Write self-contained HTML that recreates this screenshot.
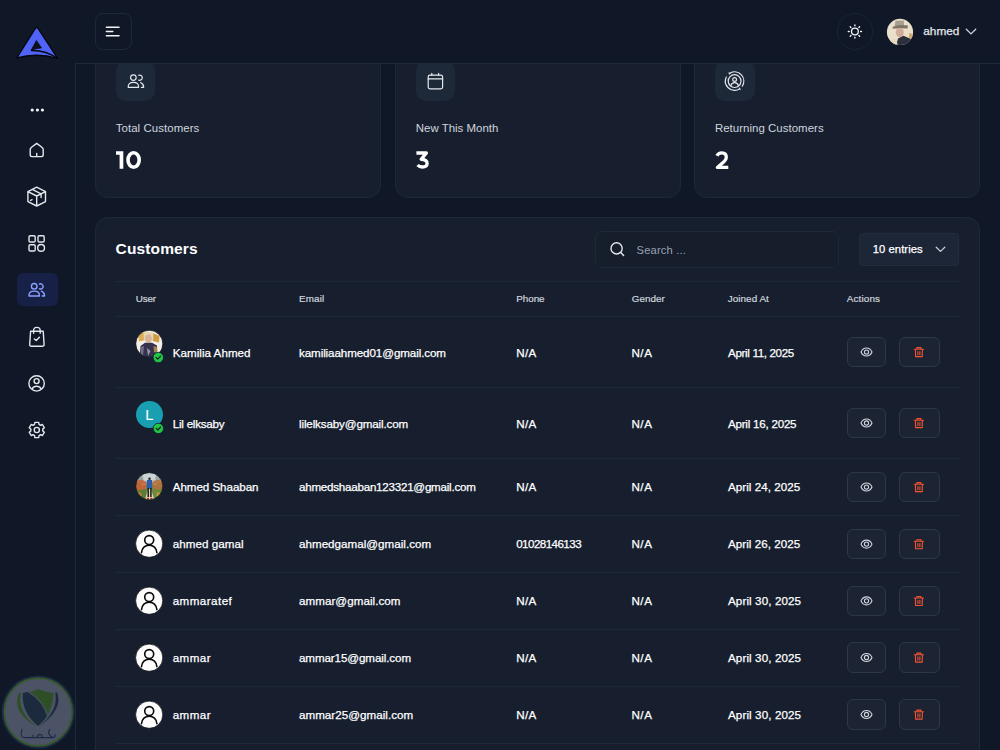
<!DOCTYPE html>
<html><head><meta charset="utf-8">
<style>
*{box-sizing:border-box;margin:0;padding:0}
html,body{width:1000px;height:750px;overflow:hidden;background:#101828;font-family:"Liberation Sans",sans-serif;color:#fff}
.a{position:absolute}
.t{position:absolute;white-space:nowrap;line-height:1}
svg{position:absolute;left:0;top:0;overflow:visible}
</style></head>
<body>
<div class="a" style="left:94.90px;top:40.00px;width:286.60px;height:157.50px;background:#171F2F;border:1px solid #1D2939;border-radius:13px;"></div>
<div class="a" style="left:115.70px;top:61.00px;width:39.70px;height:40.00px;background:#1D2939;border-radius:10px;"></div>
<div class="a" style="left:395.00px;top:40.00px;width:285.80px;height:157.50px;background:#171F2F;border:1px solid #1D2939;border-radius:13px;"></div>
<div class="a" style="left:415.80px;top:61.00px;width:39.70px;height:40.00px;background:#1D2939;border-radius:10px;"></div>
<div class="a" style="left:694.10px;top:40.00px;width:285.90px;height:157.50px;background:#171F2F;border:1px solid #1D2939;border-radius:13px;"></div>
<div class="a" style="left:714.90px;top:61.00px;width:39.70px;height:40.00px;background:#1D2939;border-radius:10px;"></div>
<div class="a" style="left:95.00px;top:217.00px;width:885.00px;height:583.00px;background:#171F2F;border:1px solid #1D2939;border-radius:13px;"></div>
<div class="a" style="left:0.00px;top:63.00px;width:75.00px;height:687.00px;background:#101828;border-radius:0px;"></div>
<div class="a" style="left:74.50px;top:63.00px;width:1.00px;height:687.00px;background:#1D2939;border-radius:0px;"></div>
<div class="a" style="left:0.00px;top:0.00px;width:1000.00px;height:63.00px;background:#101828;border-radius:0px;"></div>
<div class="a" style="left:74.50px;top:63.00px;width:925.50px;height:1.00px;background:#1D2939;border-radius:0px;"></div>
<div class="a" style="left:94.50px;top:13.00px;width:37.00px;height:37.00px;background:transparent;border:1px solid #1D2939;border-radius:8px;"></div>
<div class="a" style="left:836.70px;top:13.30px;width:36.30px;height:36.40px;background:transparent;border:1px solid #1A2333;border-radius:20px;"></div>
<div class="t" style="left:923.30px;top:25.91px;font-size:11.8px;color:#E4E7EC;-webkit-text-stroke:0.25px #E4E7EC;">ahmed</div>
<div class="t" style="left:115.70px;top:123.11px;font-size:11.45px;color:#D0D5DD;letter-spacing:0.071px;">Total Customers</div>
<div class="t" style="left:415.80px;top:123.11px;font-size:11.45px;color:#D0D5DD;letter-spacing:0.008px;">New This Month</div>
<div class="t" style="left:714.90px;top:123.11px;font-size:11.45px;color:#D0D5DD;letter-spacing:0.039px;">Returning Customers</div>
<div class="t" style="left:115.60px;top:241.28px;font-size:15.5px;color:#FFFFFF;font-weight:700;letter-spacing:0.125px;">Customers</div>
<div class="a" style="left:595.40px;top:231.20px;width:243.90px;height:36.50px;background:#161D2B;border:1px solid #1D2939;border-radius:7px;"></div>
<div class="t" style="left:636.60px;top:244.76px;font-size:11.15px;color:#98A2B3;letter-spacing:0.178px;">Search ...</div>
<div class="a" style="left:859.30px;top:232.70px;width:100.20px;height:33.10px;background:#1D2636;border:1px solid #222C3D;border-radius:4px;"></div>
<div class="t" style="left:872.80px;top:243.98px;font-size:11.25px;color:#FFFFFF;-webkit-text-stroke:0.25px #FFFFFF;letter-spacing:0.044px;">10 entries</div>
<div class="a" style="left:115.5px;top:281.00px;width:844.5px;height:1px;background:#1D2939"></div>
<div class="a" style="left:115.5px;top:316.20px;width:844.5px;height:1px;background:#1D2939"></div>
<div class="a" style="left:115.5px;top:386.90px;width:844.5px;height:1px;background:#1D2939"></div>
<div class="a" style="left:115.5px;top:458.10px;width:844.5px;height:1px;background:#1D2939"></div>
<div class="a" style="left:115.5px;top:515.00px;width:844.5px;height:1px;background:#1D2939"></div>
<div class="a" style="left:115.5px;top:572.20px;width:844.5px;height:1px;background:#1D2939"></div>
<div class="a" style="left:115.5px;top:628.50px;width:844.5px;height:1px;background:#1D2939"></div>
<div class="a" style="left:115.5px;top:685.50px;width:844.5px;height:1px;background:#1D2939"></div>
<div class="a" style="left:115.5px;top:742.50px;width:844.5px;height:1px;background:#1D2939"></div>
<div class="t" style="left:135.80px;top:294.22px;font-size:9.9px;color:#D0D5DD;-webkit-text-stroke:0.2px #D0D5DD;letter-spacing:-0.200px;">User</div>
<div class="t" style="left:299.00px;top:294.22px;font-size:9.9px;color:#D0D5DD;-webkit-text-stroke:0.2px #D0D5DD;letter-spacing:0.150px;">Email</div>
<div class="t" style="left:516.30px;top:294.22px;font-size:9.9px;color:#D0D5DD;-webkit-text-stroke:0.2px #D0D5DD;letter-spacing:-0.075px;">Phone</div>
<div class="t" style="left:631.80px;top:294.22px;font-size:9.9px;color:#D0D5DD;-webkit-text-stroke:0.2px #D0D5DD;">Gender</div>
<div class="t" style="left:727.80px;top:294.22px;font-size:9.9px;color:#D0D5DD;-webkit-text-stroke:0.2px #D0D5DD;letter-spacing:0.050px;">Joined At</div>
<div class="t" style="left:846.80px;top:294.22px;font-size:9.9px;color:#D0D5DD;-webkit-text-stroke:0.2px #D0D5DD;letter-spacing:0.133px;">Actions</div>
<div class="t" style="left:172.70px;top:347.18px;font-size:11.6px;color:#FFFFFF;-webkit-text-stroke:0.25px #FFFFFF;letter-spacing:0.042px;">Kamilia Ahmed</div>
<div class="t" style="left:299.00px;top:347.18px;font-size:11.6px;color:#FFFFFF;-webkit-text-stroke:0.25px #FFFFFF;letter-spacing:-0.087px;">kamiliaahmed01@gmail.com</div>
<div class="t" style="left:516.20px;top:347.18px;font-size:11.6px;color:#FFFFFF;-webkit-text-stroke:0.25px #FFFFFF;letter-spacing:0.400px;">N/A</div>
<div class="t" style="left:631.40px;top:347.18px;font-size:11.6px;color:#FFFFFF;-webkit-text-stroke:0.25px #FFFFFF;letter-spacing:0.600px;">N/A</div>
<div class="t" style="left:728.00px;top:347.18px;font-size:11.6px;color:#FFFFFF;-webkit-text-stroke:0.25px #FFFFFF;letter-spacing:-0.338px;">April 11, 2025</div>
<div class="a" style="left:846.60px;top:336.95px;width:39.40px;height:30.20px;background:#1C2434;border:1px solid #2D3748;border-radius:6px;"></div>
<div class="a" style="left:899.20px;top:336.95px;width:40.40px;height:30.20px;background:#1C2434;border:1px solid #2D3748;border-radius:6px;"></div>
<div class="t" style="left:172.70px;top:417.98px;font-size:11.6px;color:#FFFFFF;-webkit-text-stroke:0.25px #FFFFFF;letter-spacing:-0.220px;">Lil elksaby</div>
<div class="t" style="left:299.00px;top:417.98px;font-size:11.6px;color:#FFFFFF;-webkit-text-stroke:0.25px #FFFFFF;letter-spacing:-0.126px;">lilelksaby@gmail.com</div>
<div class="t" style="left:516.20px;top:417.98px;font-size:11.6px;color:#FFFFFF;-webkit-text-stroke:0.25px #FFFFFF;letter-spacing:0.400px;">N/A</div>
<div class="t" style="left:631.40px;top:417.98px;font-size:11.6px;color:#FFFFFF;-webkit-text-stroke:0.25px #FFFFFF;letter-spacing:0.600px;">N/A</div>
<div class="t" style="left:728.00px;top:417.98px;font-size:11.6px;color:#FFFFFF;-webkit-text-stroke:0.25px #FFFFFF;letter-spacing:-0.231px;">April 16, 2025</div>
<div class="a" style="left:846.60px;top:407.90px;width:39.40px;height:30.20px;background:#1C2434;border:1px solid #2D3748;border-radius:6px;"></div>
<div class="a" style="left:899.20px;top:407.90px;width:40.40px;height:30.20px;background:#1C2434;border:1px solid #2D3748;border-radius:6px;"></div>
<div class="t" style="left:172.70px;top:481.38px;font-size:11.6px;color:#FFFFFF;-webkit-text-stroke:0.25px #FFFFFF;letter-spacing:-0.042px;">Ahmed Shaaban</div>
<div class="t" style="left:299.00px;top:481.38px;font-size:11.6px;color:#FFFFFF;-webkit-text-stroke:0.25px #FFFFFF;letter-spacing:-0.237px;">ahmedshaaban123321@gmail.com</div>
<div class="t" style="left:516.20px;top:481.38px;font-size:11.6px;color:#FFFFFF;-webkit-text-stroke:0.25px #FFFFFF;letter-spacing:0.400px;">N/A</div>
<div class="t" style="left:631.40px;top:481.38px;font-size:11.6px;color:#FFFFFF;-webkit-text-stroke:0.25px #FFFFFF;letter-spacing:0.600px;">N/A</div>
<div class="t" style="left:728.00px;top:481.38px;font-size:11.6px;color:#FFFFFF;-webkit-text-stroke:0.25px #FFFFFF;letter-spacing:0.046px;">April 24, 2025</div>
<div class="a" style="left:846.60px;top:471.95px;width:39.40px;height:30.20px;background:#1C2434;border:1px solid #2D3748;border-radius:6px;"></div>
<div class="a" style="left:899.20px;top:471.95px;width:40.40px;height:30.20px;background:#1C2434;border:1px solid #2D3748;border-radius:6px;"></div>
<div class="t" style="left:172.70px;top:538.18px;font-size:11.6px;color:#FFFFFF;-webkit-text-stroke:0.25px #FFFFFF;letter-spacing:0.070px;">ahmed gamal</div>
<div class="t" style="left:299.00px;top:538.18px;font-size:11.6px;color:#FFFFFF;-webkit-text-stroke:0.25px #FFFFFF;letter-spacing:0.026px;">ahmedgamal@gmail.com</div>
<div class="t" style="left:516.20px;top:538.18px;font-size:11.6px;color:#FFFFFF;-webkit-text-stroke:0.25px #FFFFFF;letter-spacing:-0.550px;">01028146133</div>
<div class="t" style="left:631.40px;top:538.18px;font-size:11.6px;color:#FFFFFF;-webkit-text-stroke:0.25px #FFFFFF;letter-spacing:0.600px;">N/A</div>
<div class="t" style="left:728.00px;top:538.18px;font-size:11.6px;color:#FFFFFF;-webkit-text-stroke:0.25px #FFFFFF;letter-spacing:0.046px;">April 26, 2025</div>
<div class="a" style="left:846.60px;top:529.00px;width:39.40px;height:30.20px;background:#1C2434;border:1px solid #2D3748;border-radius:6px;"></div>
<div class="a" style="left:899.20px;top:529.00px;width:40.40px;height:30.20px;background:#1C2434;border:1px solid #2D3748;border-radius:6px;"></div>
<div class="t" style="left:172.70px;top:595.18px;font-size:11.6px;color:#FFFFFF;-webkit-text-stroke:0.25px #FFFFFF;letter-spacing:0.463px;">ammaratef</div>
<div class="t" style="left:299.00px;top:595.18px;font-size:11.6px;color:#FFFFFF;-webkit-text-stroke:0.25px #FFFFFF;letter-spacing:0.057px;">ammar@gmail.com</div>
<div class="t" style="left:516.20px;top:595.18px;font-size:11.6px;color:#FFFFFF;-webkit-text-stroke:0.25px #FFFFFF;letter-spacing:0.400px;">N/A</div>
<div class="t" style="left:631.40px;top:595.18px;font-size:11.6px;color:#FFFFFF;-webkit-text-stroke:0.25px #FFFFFF;letter-spacing:0.600px;">N/A</div>
<div class="t" style="left:728.00px;top:595.18px;font-size:11.6px;color:#FFFFFF;-webkit-text-stroke:0.25px #FFFFFF;letter-spacing:0.115px;">April 30, 2025</div>
<div class="a" style="left:846.60px;top:585.75px;width:39.40px;height:30.20px;background:#1C2434;border:1px solid #2D3748;border-radius:6px;"></div>
<div class="a" style="left:899.20px;top:585.75px;width:40.40px;height:30.20px;background:#1C2434;border:1px solid #2D3748;border-radius:6px;"></div>
<div class="t" style="left:172.70px;top:652.18px;font-size:11.6px;color:#FFFFFF;-webkit-text-stroke:0.25px #FFFFFF;letter-spacing:0.450px;">ammar</div>
<div class="t" style="left:299.00px;top:652.18px;font-size:11.6px;color:#FFFFFF;-webkit-text-stroke:0.25px #FFFFFF;letter-spacing:-0.094px;">ammar15@gmail.com</div>
<div class="t" style="left:516.20px;top:652.18px;font-size:11.6px;color:#FFFFFF;-webkit-text-stroke:0.25px #FFFFFF;letter-spacing:0.400px;">N/A</div>
<div class="t" style="left:631.40px;top:652.18px;font-size:11.6px;color:#FFFFFF;-webkit-text-stroke:0.25px #FFFFFF;letter-spacing:0.600px;">N/A</div>
<div class="t" style="left:728.00px;top:652.18px;font-size:11.6px;color:#FFFFFF;-webkit-text-stroke:0.25px #FFFFFF;letter-spacing:0.115px;">April 30, 2025</div>
<div class="a" style="left:846.60px;top:642.40px;width:39.40px;height:30.20px;background:#1C2434;border:1px solid #2D3748;border-radius:6px;"></div>
<div class="a" style="left:899.20px;top:642.40px;width:40.40px;height:30.20px;background:#1C2434;border:1px solid #2D3748;border-radius:6px;"></div>
<div class="t" style="left:172.70px;top:709.18px;font-size:11.6px;color:#FFFFFF;-webkit-text-stroke:0.25px #FFFFFF;letter-spacing:0.450px;">ammar</div>
<div class="t" style="left:299.00px;top:709.18px;font-size:11.6px;color:#FFFFFF;-webkit-text-stroke:0.25px #FFFFFF;letter-spacing:0.037px;">ammar25@gmail.com</div>
<div class="t" style="left:516.20px;top:709.18px;font-size:11.6px;color:#FFFFFF;-webkit-text-stroke:0.25px #FFFFFF;letter-spacing:0.400px;">N/A</div>
<div class="t" style="left:631.40px;top:709.18px;font-size:11.6px;color:#FFFFFF;-webkit-text-stroke:0.25px #FFFFFF;letter-spacing:0.600px;">N/A</div>
<div class="t" style="left:728.00px;top:709.18px;font-size:11.6px;color:#FFFFFF;-webkit-text-stroke:0.25px #FFFFFF;letter-spacing:0.115px;">April 30, 2025</div>
<div class="a" style="left:846.60px;top:699.40px;width:39.40px;height:30.20px;background:#1C2434;border:1px solid #2D3748;border-radius:6px;"></div>
<div class="a" style="left:899.20px;top:699.40px;width:40.40px;height:30.20px;background:#1C2434;border:1px solid #2D3748;border-radius:6px;"></div>
<div class="a" style="left:17.40px;top:273.40px;width:40.20px;height:33.00px;background:#172148;border-radius:6px;"></div>
<svg width="1000" height="750" viewBox="0 0 1000 750">
<defs>
<clipPath id="cav1"><circle cx="149.3" cy="343.8" r="13.5"/></clipPath>
<clipPath id="cav3"><circle cx="149.3" cy="486.2" r="13.5"/></clipPath>
<clipPath id="cavh"><circle cx="900" cy="31.9" r="13.1"/></clipPath>
</defs>
<path d="M35.2 28.6 Q36.7 26.6 38.2 28.6 L57.6 58.4 Q37 52.4 16.8 57.9 Z" fill="#4F63F7" stroke="#05070d" stroke-width="1.3" stroke-linejoin="round"/>
<path d="M36.4 40.4 L41.6 47.9 Q36 48.2 31 50.4 Z" fill="#0B0F1A" stroke="#05070d" stroke-width="0.6"/>
<path d="M31 50.4 Q46 50 57.6 58.4" fill="none" stroke="#05070d" stroke-width="1.5"/>
<circle cx="32.2" cy="110" r="1.6" fill="#F2F4F7"/>
<circle cx="37.4" cy="110" r="1.6" fill="#F2F4F7"/>
<circle cx="42.4" cy="110" r="1.6" fill="#F2F4F7"/>
<path d="M31.5 147.3 L36.7 143.4 L41.9 147.3 Q43.2 148.2 43.2 149.8 L43.2 154.8 Q43.2 156.6 41.4 156.6 L32 156.6 Q30.2 156.6 30.2 154.8 L30.2 149.8 Q30.2 148.2 31.5 147.3 Z M36.7 153.4 L36.7 156.6" fill="none" stroke="#E4E7EC" stroke-width="1.4" stroke-linecap="round" stroke-linejoin="round"/>
<path d="M36.7 187.2 L45.5 191.6 L45.5 201.6 L36.7 206 L27.9 201.6 L27.9 191.6 Z M27.9 191.6 L36.7 196 L45.5 191.6 M36.7 196 L36.7 206 M32.3 189.4 L41.1 193.8 L41.1 197.6 M30.5 200.5 L32 199.7" fill="none" stroke="#E4E7EC" stroke-width="1.4" stroke-linecap="round" stroke-linejoin="round"/>
<rect x="29.0" y="235.79999999999998" width="6.2" height="6.2" rx="1.2" fill="none" stroke="#E4E7EC" stroke-width="1.4" stroke-linecap="round" stroke-linejoin="round"/>
<rect x="38.0" y="235.79999999999998" width="6.2" height="6.2" rx="1.2" fill="none" stroke="#E4E7EC" stroke-width="1.4" stroke-linecap="round" stroke-linejoin="round"/>
<rect x="29.0" y="244.79999999999998" width="6.2" height="6.2" rx="1.2" fill="none" stroke="#E4E7EC" stroke-width="1.4" stroke-linecap="round" stroke-linejoin="round"/>
<circle cx="41.1" cy="247.9" r="3.4" fill="none" stroke="#E4E7EC" stroke-width="1.4" stroke-linecap="round" stroke-linejoin="round"/>
<circle cx="34.2" cy="286.3" r="2.8" fill="none" stroke="#8AA0FF" stroke-width="1.4" stroke-linecap="round" stroke-linejoin="round"/><path d="M29.00 296.00 Q28.70 291.10 34.20 291.10 Q39.70 291.10 39.40 296.00 Z" fill="none" stroke="#8AA0FF" stroke-width="1.4" stroke-linecap="round" stroke-linejoin="round"/><path d="M39.50 284.00 A2.6 2.6 0 1 1 39.50 288.80" fill="none" stroke="#8AA0FF" stroke-width="1.4" stroke-linecap="round" stroke-linejoin="round"/><path d="M41.40 291.20 Q44.50 292.50 44.50 296.00 L42.20 296.00" fill="none" stroke="#8AA0FF" stroke-width="1.4" stroke-linecap="round" stroke-linejoin="round"/>
<path d="M30.6 331.2 L43.2 331.2 L44.1 344.2 Q44.2 346.2 42.2 346.2 L31.6 346.2 Q29.6 346.2 29.7 344.2 Z M33.6 333.3 L33.6 330.5 Q33.6 327.4 36.9 327.4 Q40.2 327.4 40.2 330.5 L40.2 333.3 M34.4 338.9 L36.2 340.6 L39.4 337.3" fill="none" stroke="#E4E7EC" stroke-width="1.4" stroke-linecap="round" stroke-linejoin="round"/>
<circle cx="36.6" cy="383.4" r="7.7" fill="none" stroke="#E4E7EC" stroke-width="1.4" stroke-linecap="round" stroke-linejoin="round"/><circle cx="36.6" cy="381.1" r="2.5" fill="none" stroke="#E4E7EC" stroke-width="1.4" stroke-linecap="round" stroke-linejoin="round"/><path d="M32.3 388.6 Q33.4 386.2 36.6 386.2 Q39.8 386.2 40.9 388.6" fill="none" stroke="#E4E7EC" stroke-width="1.4" stroke-linecap="round" stroke-linejoin="round"/>
<path d="M34.89 422.33 L38.71 422.33 L39.05 424.44 L40.49 425.27 L42.48 424.51 L44.39 427.82 L42.74 429.16 L42.74 430.84 L44.39 432.18 L42.48 435.49 L40.49 434.73 L39.05 435.56 L38.71 437.67 L34.89 437.67 L34.55 435.56 L33.11 434.73 L31.12 435.49 L29.21 432.18 L30.86 430.84 L30.86 429.16 L29.21 427.82 L31.12 424.51 L33.11 425.27 L34.55 424.44 Z" fill="none" stroke="#E4E7EC" stroke-width="1.4" stroke-linecap="round" stroke-linejoin="round"/><circle cx="36.8" cy="430.0" r="2.6" fill="none" stroke="#E4E7EC" stroke-width="1.4" stroke-linecap="round" stroke-linejoin="round"/>
<path d="M106.4 27.2 L119 27.2 M106.4 31.5 L112.8 31.5 M106.4 35.7 L119 35.7" stroke="#F2F4F7" stroke-width="1.5" stroke-linecap="round"/>
<circle cx="854.9" cy="31.5" r="3.4" fill="none" stroke="#F2F4F7" stroke-width="1.3"/><path d="M860.60 31.50 L861.50 31.50 M858.93 35.53 L859.57 36.17 M854.90 37.20 L854.90 38.10 M850.87 35.53 L850.23 36.17 M849.20 31.50 L848.30 31.50 M850.87 27.47 L850.23 26.83 M854.90 25.80 L854.90 24.90 M858.93 27.47 L859.57 26.83" stroke="#F2F4F7" stroke-width="1.4" stroke-linecap="round"/>
<g clip-path="url(#cavh)"><rect x="886" y="18" width="28" height="28" fill="#EADFCB"/><path d="M894.6 26 L895.5 20.8 L903.8 20.6 L904 26 Z" fill="#A89F92"/><path d="M892.4 27 Q899 24 908 25.5 L907.5 28.6 Q899 27.6 893 28.8 Z" fill="#7E7468"/><ellipse cx="899.8" cy="32.6" rx="4" ry="4.6" fill="#D2AC9A"/><path d="M896 46 L898 38.5 L903.5 35.8 L911 39 L913 46 Z" fill="#2C2F3C"/><path d="M889 40 L896 38.5 L898 46 L889 46 Z" fill="#E7D9C0"/><path d="M909 33 L913 34 L913 39 L909 38 Z" fill="#C99B5E" opacity="0.8"/></g>
<path d="M966.3 29.2 L971 33.9 L975.7 29.2" fill="none" stroke="#D0D5DD" stroke-width="1.3" stroke-linecap="round" stroke-linejoin="round"/>
<circle cx="133.4" cy="77.6" r="2.8" fill="none" stroke="#E4E7EC" stroke-width="1.2" stroke-linecap="round" stroke-linejoin="round"/><path d="M128.20 87.30 Q127.90 82.40 133.40 82.40 Q138.90 82.40 138.60 87.30 Z" fill="none" stroke="#E4E7EC" stroke-width="1.2" stroke-linecap="round" stroke-linejoin="round"/><path d="M138.70 75.30 A2.6 2.6 0 1 1 138.70 80.10" fill="none" stroke="#E4E7EC" stroke-width="1.2" stroke-linecap="round" stroke-linejoin="round"/><path d="M140.60 82.50 Q143.70 83.80 143.70 87.30 L141.40 87.30" fill="none" stroke="#E4E7EC" stroke-width="1.2" stroke-linecap="round" stroke-linejoin="round"/>
<rect x="428.2" y="75.1" width="14.4" height="13.7" rx="1.8" fill="none" stroke="#E4E7EC" stroke-width="1.2" stroke-linecap="round" stroke-linejoin="round"/><path d="M428.2 78.9 L442.6 78.9 M431.8 73.4 L431.8 75.4 M438.6 73.4 L438.6 75.4" fill="none" stroke="#E4E7EC" stroke-width="1.2" stroke-linecap="round" stroke-linejoin="round"/>
<circle cx="734.6" cy="81.1" r="6.4" fill="none" stroke="#E4E7EC" stroke-width="1.2" stroke-linecap="round" stroke-linejoin="round"/><circle cx="734.6" cy="79.5" r="1.9" fill="none" stroke="#E4E7EC" stroke-width="1.2" stroke-linecap="round" stroke-linejoin="round"/><path d="M730.7 85.8 Q731.6 82.7 734.6 82.7 Q737.6 82.7 738.5 85.8" fill="none" stroke="#E4E7EC" stroke-width="1.2" stroke-linecap="round" stroke-linejoin="round"/>
<path d="M730.28 72.98 A9.2 9.2 0 0 1 742.23 86.24 M738.92 89.22 A9.2 9.2 0 0 1 726.33 77.07" fill="none" stroke="#E4E7EC" stroke-width="1.2" stroke-linecap="round" stroke-linejoin="round"/>
<path d="M728.16 72.40 L730.81 72.70 L729.57 75.05 Z" fill="#E4E7EC"/>
<path d="M741.04 89.80 L738.39 89.50 L739.63 87.15 Z" fill="#E4E7EC"/>
<path d="M116 151.3 L123.3 151.3 L123.3 168.8 L119.6 168.8 L119.6 154.7 L116 154.7 Z" fill="#FFFFFF"/>
<ellipse cx="133.6" cy="160" rx="5.6" ry="7.2" fill="none" stroke="#FFFFFF" stroke-width="3.6"/>
<path d="M416.4 153 L426.4 153 L421.2 159.3 Q427.1 159.3 427.1 163.5 Q427.1 167 422.3 167 Q419.4 167 417.6 165" fill="none" stroke="#FFFFFF" stroke-width="3.3" stroke-linejoin="round"/>
<path d="M716.9 155.8 Q718.4 152.8 721.8 152.8 Q726.3 152.8 726.3 157.2 Q726.3 159.4 724.2 161.4 L717.4 167.4 L728.3 167.4" fill="none" stroke="#FFFFFF" stroke-width="3.3" stroke-linejoin="round"/>
<circle cx="616.6" cy="248.4" r="5.6" fill="none" stroke="#E4E7EC" stroke-width="1.4"/><path d="M620.8 252.6 L623.6 255.6" stroke="#E4E7EC" stroke-width="1.4" stroke-linecap="round"/>
<path d="M936.2 247.2 L940.5 251.4 L944.8 247.2" fill="none" stroke="#D0D5DD" stroke-width="1.2" stroke-linecap="round" stroke-linejoin="round"/>
<g clip-path="url(#cav1)"><rect x="135" y="330" width="29" height="29" fill="#F3EFE8"/><path d="M138 334 L145 332.5 L145.5 340 L139 341.5 Z" fill="#D9A445" opacity="0.9"/><path d="M153 333 L159.5 336 L159 342.5 L153 341 Z" fill="#CF9232" opacity="0.9"/><path d="M143.5 333.5 Q148.5 329.8 153.5 333.5 L153 341 L144 341 Z" fill="#E8D7AE"/><ellipse cx="148.4" cy="338.6" rx="3.3" ry="4.2" fill="#D7B49C"/><path d="M139.5 359 L140.5 346 L145 342.8 L152 342.8 L157 345.5 L157.5 359 Z" fill="#34324E"/><path d="M141 347 L144 346 L143 356 L140.5 356 Z" fill="#8C88A8" opacity="0.7"/><path d="M147 348 L150.5 351 L148 356 Z" fill="#C4C0D4" opacity="0.7"/><path d="M153.5 346 L157 347 L157 353 L154 352 Z" fill="#D8A24A" opacity="0.7"/></g>
<circle cx="149.3" cy="343.8" r="13.6" fill="none" stroke="#0B0F18" stroke-width="0.8"/>
<circle cx="149.5" cy="414.5" r="13.5" fill="#199FB2"/>
<g clip-path="url(#cav3)"><rect x="135" y="472" width="29" height="29" fill="#6C8A43"/><rect x="135" y="472" width="29" height="10.5" fill="#CBD5D8"/><path d="M138 482 L139 476 L141 474 L143 477 L144 482 Z M155 482 L156 475 L158 474 L160 477 L161 482 Z" fill="#8E9A96" opacity="0.8"/><path d="M135 481 L141 479.5 L146 481.5 L146 490 L135 491 Z" fill="#C8623A" opacity="0.9"/><path d="M153 481 L158 479.8 L164 481 L164 490 L153 489 Z" fill="#B8703A" opacity="0.85"/><path d="M135 491 L146 489 L146 501 L135 501 Z" fill="#5A7C36"/><path d="M153 489 L164 491 L164 501 L153 501 Z" fill="#6A8A3C"/><path d="M137 493 L141 492 L142 496 L138 497 Z" fill="#C98040" opacity="0.8"/><path d="M157 492 L161 493 L160 497 L156 496 Z" fill="#D09A40" opacity="0.8"/><path d="M144.5 501 L148.2 489 L150.8 489 L155 501 Z" fill="#E3D6B5"/><path d="M141.5 484.2 L157.3 484.2" stroke="#C98455" stroke-width="1.2"/><rect x="146.8" y="480" width="5.4" height="8.4" fill="#2F5BA8"/><circle cx="149.5" cy="478.8" r="1.3" fill="#3A2A20"/><path d="M148.2 488 L148.2 497 M150.9 488 L150.9 497" stroke="#1A1A1A" stroke-width="1.5"/><path d="M147 498.3 L149 498.3 M150.3 498.3 L152.3 498.3" stroke="#D03020" stroke-width="1.3"/></g>
<circle cx="149.3" cy="486.2" r="13.6" fill="none" stroke="#0B0F18" stroke-width="0.8"/>
<circle cx="149.2" cy="543.7" r="13.6" fill="#FDFDFD" stroke="#000" stroke-width="0.7"/>
<circle cx="149.2" cy="540.10" r="4.5" fill="none" stroke="#0A0A0A" stroke-width="1.6"/>
<path d="M141.5 552.60 Q142.5 545.20 149.2 545.20 Q155.9 545.20 156.9 552.60" fill="none" stroke="#0A0A0A" stroke-width="1.6" stroke-linecap="round"/>
<circle cx="149.2" cy="600.7" r="13.6" fill="#FDFDFD" stroke="#000" stroke-width="0.7"/>
<circle cx="149.2" cy="597.10" r="4.5" fill="none" stroke="#0A0A0A" stroke-width="1.6"/>
<path d="M141.5 609.60 Q142.5 602.20 149.2 602.20 Q155.9 602.20 156.9 609.60" fill="none" stroke="#0A0A0A" stroke-width="1.6" stroke-linecap="round"/>
<circle cx="149.2" cy="657.7" r="13.6" fill="#FDFDFD" stroke="#000" stroke-width="0.7"/>
<circle cx="149.2" cy="654.10" r="4.5" fill="none" stroke="#0A0A0A" stroke-width="1.6"/>
<path d="M141.5 666.60 Q142.5 659.20 149.2 659.20 Q155.9 659.20 156.9 666.60" fill="none" stroke="#0A0A0A" stroke-width="1.6" stroke-linecap="round"/>
<circle cx="149.2" cy="714.7" r="13.6" fill="#FDFDFD" stroke="#000" stroke-width="0.7"/>
<circle cx="149.2" cy="711.10" r="4.5" fill="none" stroke="#0A0A0A" stroke-width="1.6"/>
<path d="M141.5 723.60 Q142.5 716.20 149.2 716.20 Q155.9 716.20 156.9 723.60" fill="none" stroke="#0A0A0A" stroke-width="1.6" stroke-linecap="round"/>
<circle cx="158.3" cy="357.5" r="5.2" fill="#22C443" stroke="#101828" stroke-width="0.8"/><path d="M156.10 357.50 L157.70 359.10 L160.60 356.10" fill="none" stroke="#101828" stroke-width="1.1" stroke-linecap="round" stroke-linejoin="round"/>
<circle cx="158.4" cy="428.4" r="5.2" fill="#22C443" stroke="#101828" stroke-width="0.8"/><path d="M156.20 428.40 L157.80 430.00 L160.70 427.00" fill="none" stroke="#101828" stroke-width="1.1" stroke-linecap="round" stroke-linejoin="round"/>
<path d="M861.00 352.05 C862.50 348.55 864.50 348.05 866.50 348.05 C868.50 348.05 870.50 348.55 872.00 352.05 C870.50 355.55 868.50 356.05 866.50 356.05 C864.50 356.05 862.50 355.55 861.00 352.05 Z" fill="none" stroke="#D0D5DD" stroke-width="1.1" stroke-linejoin="round"/><circle cx="866.5" cy="352.05" r="2.1" fill="none" stroke="#D0D5DD" stroke-width="1.1"/>
<path d="M914.30 349.25 L923.50 349.25 M916.90 349.25 L916.90 347.65 L920.90 347.65 L920.90 349.25 M915.40 349.25 L915.60 356.65 L922.20 356.65 L922.40 349.25 M917.90 351.45 L917.90 354.65 M919.90 351.45 L919.90 354.65" fill="none" stroke="#F5522F" stroke-width="1.1" stroke-linecap="round" stroke-linejoin="round"/>
<path d="M861.00 423.00 C862.50 419.50 864.50 419.00 866.50 419.00 C868.50 419.00 870.50 419.50 872.00 423.00 C870.50 426.50 868.50 427.00 866.50 427.00 C864.50 427.00 862.50 426.50 861.00 423.00 Z" fill="none" stroke="#D0D5DD" stroke-width="1.1" stroke-linejoin="round"/><circle cx="866.5" cy="423.00" r="2.1" fill="none" stroke="#D0D5DD" stroke-width="1.1"/>
<path d="M914.30 420.20 L923.50 420.20 M916.90 420.20 L916.90 418.60 L920.90 418.60 L920.90 420.20 M915.40 420.20 L915.60 427.60 L922.20 427.60 L922.40 420.20 M917.90 422.40 L917.90 425.60 M919.90 422.40 L919.90 425.60" fill="none" stroke="#F5522F" stroke-width="1.1" stroke-linecap="round" stroke-linejoin="round"/>
<path d="M861.00 487.05 C862.50 483.55 864.50 483.05 866.50 483.05 C868.50 483.05 870.50 483.55 872.00 487.05 C870.50 490.55 868.50 491.05 866.50 491.05 C864.50 491.05 862.50 490.55 861.00 487.05 Z" fill="none" stroke="#D0D5DD" stroke-width="1.1" stroke-linejoin="round"/><circle cx="866.5" cy="487.05" r="2.1" fill="none" stroke="#D0D5DD" stroke-width="1.1"/>
<path d="M914.30 484.25 L923.50 484.25 M916.90 484.25 L916.90 482.65 L920.90 482.65 L920.90 484.25 M915.40 484.25 L915.60 491.65 L922.20 491.65 L922.40 484.25 M917.90 486.45 L917.90 489.65 M919.90 486.45 L919.90 489.65" fill="none" stroke="#F5522F" stroke-width="1.1" stroke-linecap="round" stroke-linejoin="round"/>
<path d="M861.00 544.10 C862.50 540.60 864.50 540.10 866.50 540.10 C868.50 540.10 870.50 540.60 872.00 544.10 C870.50 547.60 868.50 548.10 866.50 548.10 C864.50 548.10 862.50 547.60 861.00 544.10 Z" fill="none" stroke="#D0D5DD" stroke-width="1.1" stroke-linejoin="round"/><circle cx="866.5" cy="544.10" r="2.1" fill="none" stroke="#D0D5DD" stroke-width="1.1"/>
<path d="M914.30 541.30 L923.50 541.30 M916.90 541.30 L916.90 539.70 L920.90 539.70 L920.90 541.30 M915.40 541.30 L915.60 548.70 L922.20 548.70 L922.40 541.30 M917.90 543.50 L917.90 546.70 M919.90 543.50 L919.90 546.70" fill="none" stroke="#F5522F" stroke-width="1.1" stroke-linecap="round" stroke-linejoin="round"/>
<path d="M861.00 600.85 C862.50 597.35 864.50 596.85 866.50 596.85 C868.50 596.85 870.50 597.35 872.00 600.85 C870.50 604.35 868.50 604.85 866.50 604.85 C864.50 604.85 862.50 604.35 861.00 600.85 Z" fill="none" stroke="#D0D5DD" stroke-width="1.1" stroke-linejoin="round"/><circle cx="866.5" cy="600.85" r="2.1" fill="none" stroke="#D0D5DD" stroke-width="1.1"/>
<path d="M914.30 598.05 L923.50 598.05 M916.90 598.05 L916.90 596.45 L920.90 596.45 L920.90 598.05 M915.40 598.05 L915.60 605.45 L922.20 605.45 L922.40 598.05 M917.90 600.25 L917.90 603.45 M919.90 600.25 L919.90 603.45" fill="none" stroke="#F5522F" stroke-width="1.1" stroke-linecap="round" stroke-linejoin="round"/>
<path d="M861.00 657.50 C862.50 654.00 864.50 653.50 866.50 653.50 C868.50 653.50 870.50 654.00 872.00 657.50 C870.50 661.00 868.50 661.50 866.50 661.50 C864.50 661.50 862.50 661.00 861.00 657.50 Z" fill="none" stroke="#D0D5DD" stroke-width="1.1" stroke-linejoin="round"/><circle cx="866.5" cy="657.50" r="2.1" fill="none" stroke="#D0D5DD" stroke-width="1.1"/>
<path d="M914.30 654.70 L923.50 654.70 M916.90 654.70 L916.90 653.10 L920.90 653.10 L920.90 654.70 M915.40 654.70 L915.60 662.10 L922.20 662.10 L922.40 654.70 M917.90 656.90 L917.90 660.10 M919.90 656.90 L919.90 660.10" fill="none" stroke="#F5522F" stroke-width="1.1" stroke-linecap="round" stroke-linejoin="round"/>
<path d="M861.00 714.50 C862.50 711.00 864.50 710.50 866.50 710.50 C868.50 710.50 870.50 711.00 872.00 714.50 C870.50 718.00 868.50 718.50 866.50 718.50 C864.50 718.50 862.50 718.00 861.00 714.50 Z" fill="none" stroke="#D0D5DD" stroke-width="1.1" stroke-linejoin="round"/><circle cx="866.5" cy="714.50" r="2.1" fill="none" stroke="#D0D5DD" stroke-width="1.1"/>
<path d="M914.30 711.70 L923.50 711.70 M916.90 711.70 L916.90 710.10 L920.90 710.10 L920.90 711.70 M915.40 711.70 L915.60 719.10 L922.20 719.10 L922.40 711.70 M917.90 713.90 L917.90 717.10 M919.90 713.90 L919.90 717.10" fill="none" stroke="#F5522F" stroke-width="1.1" stroke-linecap="round" stroke-linejoin="round"/>
<defs><filter id="wblur" x="-10%" y="-10%" width="120%" height="120%"><feGaussianBlur stdDeviation="0.45"/></filter></defs>
<g filter="url(#wblur)"><circle cx="38.2" cy="712" r="36.5" fill="#1F2C44"/><circle cx="38.2" cy="712" r="34.8" fill="#375A2A"/><circle cx="38.2" cy="712" r="33" fill="#4D5366"/><path d="M19.2 692.3 Q10.5 712 37 727 Q17.2 712 20.8 693 Z" fill="#2F5027"/><path d="M22.8 693 Q31 692 38.5 688.5 Q46 692 54 692.8 Q54 713 38 726 Q21.5 713 22.8 693 Z" fill="#1C2A3C"/><path d="M28.5 692 Q33 691 38.5 688.5 Q46 692 54 692.8 Q53.6 706 47.8 716.6 Q43 700 28.5 692 Z" fill="#2F5027" stroke="#4D5366" stroke-width="1.1"/><path d="M57 692.3 Q64 709 38.6 727 Q59 710 55.2 693 Z" fill="#1C2A3C"/><path d="M22 729.5 Q19.5 737.6 24.5 737.6 L52.5 737.6 Q55.5 737.6 55 734.5 M52.5 737.6 Q46 733 50 729.5 M37 737.6 Q38 734 40.5 734.5 Q43 735 42 737.6 M33 737.6 L33 735" fill="none" stroke="#1F2C44" stroke-width="1.2" stroke-linecap="round"/></g>
</svg><div class="t" style="left:145.20px;top:407.64px;font-size:14.6px;color:#FFFFFF;-webkit-text-stroke:0.1px #FFFFFF;">L</div>
</body></html>
